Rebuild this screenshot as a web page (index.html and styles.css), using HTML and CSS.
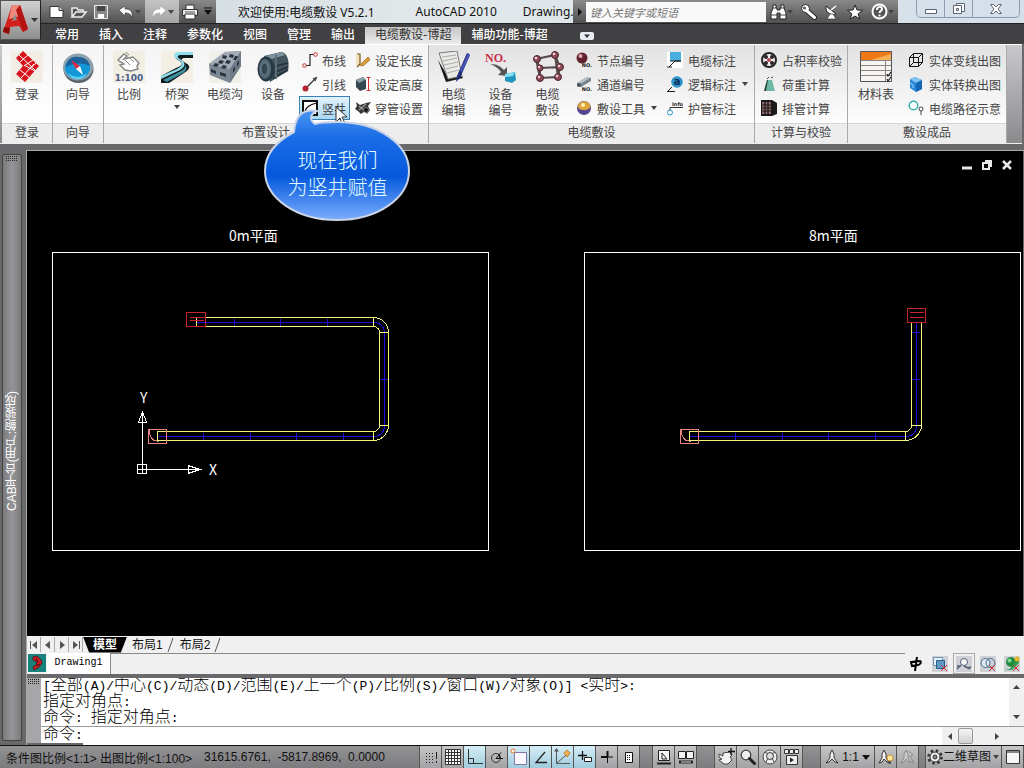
FILE: index.html
```html
<!DOCTYPE html>
<html lang="zh-CN">

<head>
    <meta charset="UTF-8">
    <meta name="viewport" content="width=device-width, initial-scale=1.0">
    <title>电缆敷设 V5.2.1</title>
    <link rel="stylesheet" href="styles.css">
</head>

<body>
    <div class="app">

        <header class="header">
            <button class="app-button" aria-label="应用程序菜单">
                <svg width="38" height="38" viewBox="0 0 38 38">
                    <path d="M10 4h8l8 24-5 3-4-6-9 1-1 7-6-2z" fill="#d3201c" />
                    <path d="M10 4h8l3 10-14 4z" fill="#f08a80" />
                    <path d="M1 31l1-5 6 1-1 6z" fill="#8e0c0a" />
                    <path d="M10 20l3-7 2 6z" fill="#8a8a8a" />
                    <path d="M18 4l8 24-5 3-7-22z" fill="#b41512" />
                    <path d="M29 17h7l-3.500 4z" fill="#333" />
                </svg>
            </button>

            <div class="title-bar">
                <div class="quick-access">
                    <button aria-label="新建"><svg width="18" height="16" viewBox="0 0 18 16"><path d="M2 2.500h9l4 4v7H2z" fill="#fff" stroke="#333" /><path d="M11 2.500v4h4" fill="#ccc" stroke="#333" /></svg></button>
                    <button aria-label="打开"><svg width="18" height="16" viewBox="0 0 18 16"><path d="M2 13V4h5l1 2h5v2M2 13l4-5h10l-4 5z" fill="#555" stroke="#eee" stroke-width="1.500" /></svg></button>
                    <button aria-label="保存"><svg width="18" height="16" viewBox="0 0 18 16"><path d="M2.500 1.500h13v13h-13z" fill="#888" stroke="#eee" /><path d="M5 2h8v5H5z" fill="#444" /><path d="M6 10h6v4H6z" fill="#fff" /></svg></button>
                    <button class="with-arrow" aria-label="放弃"><svg width="18" height="16" viewBox="0 0 18 16"><path d="M2 6l6-4v3c5 0 8 2 7 9-1-4-3-5-7-5v3z" fill="#fff" stroke="#333" stroke-width=".6" /></svg><i class="arrow"></i></button>
                    <button class="with-arrow faded" aria-label="重做"><svg width="18" height="16" viewBox="0 0 18 16"><path d="M16 6l-6-4v3C5 5 2 7 3 14c1-4 3-5 7-5v3z" fill="#fff" stroke="#aaa" stroke-width=".6" /></svg><i class="arrow"></i></button>
                    <button aria-label="打印"><svg width="18" height="16" viewBox="0 0 18 16"><path d="M5 1h8v5H5z" fill="#fff" stroke="#333" /><path d="M1.500 5.500h15v6h-15z" fill="#eee" stroke="#333" /><path d="M4 10h10v5H4z" fill="#fff" stroke="#333" /><path d="M4 8h10" stroke="#555" /></svg></button>
                    <button class="customize" aria-label="自定义"><svg width="8" height="9" viewBox="0 0 8 9"><path d="M0 1h8" stroke="#111" /><path d="M0 3h8L4 8z" fill="#111" /></svg></button>
                </div>
                <div class="caption">
                    <span>欢迎使用:电缆敷设 V5.2.1</span>
                    <span class="product">AutoCAD 2010</span>
                    <span class="file">Drawing.</span>
                </div>
                <div class="info-center">
                    <button class="collapse" aria-label="收拢"><svg width="6" height="8" viewBox="0 0 6 8"><path d="M1 0v8l4-4z" fill="#111" /></svg></button>
                    <input type="text" class="search" placeholder="键入关键字或短语" aria-label="键入关键字或短语">
                    <button class="with-arrow" aria-label="搜索"><svg width="17" height="16" viewBox="0 0 17 16"><path d="M3 1h3v3h1v2h3V4h1V1h3v3l2 5v6h-6V9H7v6H1V9l2-5z" fill="#fff" stroke="#222" /><path d="M1 11h6M10 11h6M3 4h4M10 4h4" stroke="#444" /></svg><i class="arrow"></i></button>
                    <button aria-label="速博应用中心"><svg width="18" height="16" viewBox="0 0 18 16"><path d="M6.500 6.500l8 7" stroke="#222" stroke-width="5" stroke-linecap="round" /><circle cx="5.500" cy="4.500" r="4" fill="#fff" stroke="#222" /><path d="M6.500 6.500l8 7" stroke="#fff" stroke-width="3" stroke-linecap="round" /><circle cx="4.500" cy="4" r="1.500" fill="#555" /></svg></button>
                    <button aria-label="通讯中心"><svg width="16" height="16" viewBox="0 0 16 16"><path d="M2 2c-1 6 4 10 10 8z" fill="#fff" stroke="#222" /><path d="M7 6l5-4" stroke="#fff" stroke-width="1.500" /><path d="M6 10l-3 5h9l-3-5z" fill="#fff" stroke="#222" stroke-width=".6" /></svg></button>
                    <button aria-label="收藏夹"><svg width="16" height="16" viewBox="0 0 16 16"><path d="M8 1l2 5 5.500.300-4.300 3.500 1.500 5.200L8 12l-4.700 3 1.500-5.200L.500 6.300 6 6z" fill="#fff" stroke="#222" /></svg></button>
                    <button class="with-arrow" aria-label="帮助"><svg width="17" height="17" viewBox="0 0 17 17"><circle cx="8.500" cy="8.500" r="7" fill="#555" stroke="#fff" stroke-width="2" /><path d="M6 7c0-4 5-4 5-1 0 2-2.500 2-2.500 4M8.500 11.500v2" fill="none" stroke="#fff" stroke-width="2" /></svg><i class="arrow"></i></button>
                </div>
                <div class="window-buttons">
                    <button aria-label="最小化"><svg width="14" height="12" viewBox="0 0 14 12"><path d="M1.500 6.500h11v4h-11z" fill="#fff" stroke="#5b6475" /></svg></button>
                    <button aria-label="还原"><svg width="14" height="13" viewBox="0 0 14 13"><path d="M4.500 1.500h8v8h-8z" fill="#fff" stroke="#5b6475" /><path d="M1.500 3.500h8v8h-8z" fill="#fff" stroke="#5b6475" /><path d="M4.500 6.500h2v2h-2z" fill="#fff" stroke="#5b6475" /></svg></button>
                    <button class="close" aria-label="关闭"><svg width="14" height="12" viewBox="0 0 14 12"><path d="M1.500 1.500h3L7 4l2.500-2.500h3L9 6l3.500 4.500h-3L7 8l-2.500 2.500h-3L5 6z" fill="#fff" stroke="#5b6475" /></svg></button>
                </div>
            </div>

            <nav class="ribbon-tabs">
                <a href="#">常用</a>
                <a href="#">插入</a>
                <a href="#">注释</a>
                <a href="#">参数化</a>
                <a href="#">视图</a>
                <a href="#">管理</a>
                <a href="#">输出</a>
                <a href="#" class="active">电缆敷设-博超</a>
                <a href="#">辅助功能-博超</a>
                <button class="ribbon-toggle" aria-label="最小化功能区"><svg width="14" height="8" viewBox="0 0 14 8"><rect width="14" height="8" rx="2" fill="#e8ebf2" /><path d="M4 2.500h6L7 6z" fill="#333" /></svg></button>
            </nav>
        </header>

        <div class="ribbon">
            <section class="panel">
                <div class="tools">
                    <button class="big">
                        <svg width="32" height="32" viewBox="0 0 32 32"><path d="M0 0h32v32H0z" fill="#f2eee4" /><path d="M12 0l16 15-14 16-9-8 7-8-7-8z" fill="#d8141c" /><path d="M9 11L17 4M13 15l9-6M17 19l8-7M8 4l16 15M9 19l10 8M13 14l11 6M10 27l13-14" stroke="#fff" fill="none" /></svg>
                        <span>登录</span>
                    </button>
                </div>
                <h2>登录</h2>
            </section>

            <section class="panel">
                <div class="tools">
                    <button class="big">
                        <svg width="32" height="32" viewBox="0 0 32 32"><ellipse cx="16.500" cy="18" rx="15" ry="14" fill="#566069" /><ellipse cx="16" cy="16" rx="15" ry="13.500" fill="#8fa0ad" /><ellipse cx="15.500" cy="17" rx="12.500" ry="11" fill="#1296d8" /><path d="M3.500 16C5 8 11 5 16 6c7 0 11 4 12 9-8-4-16-3-24.500 1z" fill="#1f5f9a" /><path d="M6 22c5 5 14 5 19 0-3 8-16 8-19 0z" fill="#5ad2f5" /><path d="M9 9l9 6-4 3z" fill="#e32b3e" /><path d="M18 15l3 9-7-6z" fill="#fff" /></svg>
                        <span>向导</span>
                    </button>
                </div>
                <h2>向导</h2>
            </section>

            <section class="panel">
                <div class="tools">
                    <button class="big">
                        <svg width="32" height="32" viewBox="0 0 32 32"><path d="M0 0h32v32H0z" fill="#f1eee2" /><path d="M5 9l6-6 3 2-3 3 9-2 6 6-2 3 1 3-7 2-6-1-5-5 4-1-5-3z" fill="#fff" stroke="#888" stroke-width="1.500" /><path d="M12 9l5 5M17 7l4 4M13 1l3 3" stroke="#888" /><text x="16" y="30" text-anchor="middle" class="icon-text scale-text">1:100</text></svg>
                        <span>比例</span>
                    </button>
                    <button class="big">
                        <svg width="32" height="32" viewBox="0 0 32 32"><path d="M0 0h32v32H0z" fill="#f3efe4" /><path d="M32 3H18c-4 0-5 4-1 6 7 4 3 6-2 8L0 25v7h8l15-10c8-5 6-8 0-11-4-2-2-4 1-4h8z" fill="#11191c" /><path d="M32 1H17c-5 1-5 5-1 7 7 4 6 7 0 10L0 25v3l19-9c6-4 6-7 0-11-4-2-2-4 1-4h12z" fill="#8fe0ec" /><path d="M2 29l18-9c5-3 5-5 3-7 4 3 3 6-1 9L6 31z" fill="#3f8fa0" /></svg>
                        <span>桥架</span>
                        <i class="arrow"></i>
                    </button>
                    <button class="big">
                        <svg width="32" height="32" viewBox="0 0 32 32"><path d="M0 0h32v32H0z" fill="#f1efe9" /><path d="M0 13L16 1l16-1v15L21 32 1 24z" fill="#7d8895" /><path d="M0 13L16 1l16-1-11 18z" fill="#a2abb5" /><path d="M21 18L32 0v15L21 32z" fill="#707b88" /><path d="M14 4l4 1-1 3-4-1zM21 3l4 1-1 3-4-1zM11 9l4 1-2 3-4-1zM18 9l4 1-2 3-4-1zM26 5h3l-2 4h-3zM6 12l4 1-2 3-4-1zM14 14l4 1-2 3-4-1zM2 18l5 2v3l-5-2zM11 21l6 2v3l-6-2zM24 18l2-3v4l-2 3zM28 12l2-3v4l-2 3z" fill="#2b333d" /></svg>
                        <span>电缆沟</span>
                    </button>
                    <button class="big">
                        <svg width="32" height="32" viewBox="0 0 32 32"><path d="M7 5l17-4c6 0 9 9 7 19L13 31z" fill="#44545f" /><path d="M9 5l16-4 3 3-17 5z" fill="#7f949e" /><path d="M15 16l16-4M16 22l15-6M16 27l15-8" stroke="#233038" stroke-width="1.500" /><ellipse cx="9" cy="18" rx="8.500" ry="12.500" fill="#293943" /><ellipse cx="8" cy="18" rx="6" ry="10" fill="#526a76" /><ellipse cx="7.500" cy="18" rx="3.500" ry="6" fill="#34464f" stroke="#6d838d" /><path d="M19 4v24" stroke="#5a6e79" stroke-width="2" /></svg>
                        <span>设备</span>
                    </button>
                    <div class="small-col">
                        <button class="small">
                            <svg width="16" height="16" viewBox="0 0 16 16"><path d="M3 13.500h5v-11h4" fill="none" stroke="#222" stroke-width="1.200" /><circle cx="2.500" cy="13.500" r="1.800" fill="#fff" stroke="#c3272b" /><circle cx="13.500" cy="2.500" r="1.800" fill="#fff" stroke="#c3272b" /></svg>
                            <span>布线</span>
                        </button>
                        <button class="small">
                            <svg width="16" height="16" viewBox="0 0 16 16"><path d="M4 12L14 2" stroke="#333" stroke-width="1.200" /><path d="M15.500.500l-5 2 3 3z" fill="#444" /><circle cx="3.500" cy="12.500" r="3" fill="#b32531" /></svg>
                            <span>引线</span>
                        </button>
                        <button class="small selected">
                            <svg width="16" height="16" viewBox="0 0 16 16"><path d="M1 1h14v14H1z" fill="#fff" stroke="#111" stroke-width="2" /><path d="M3 13c0-6 5-8 11-10" fill="none" stroke="#111" stroke-width="1.300" /></svg>
                            <span>竖井</span>
                        </button>
                    </div>
                    <div class="small-col">
                        <button class="small">
                            <svg width="16" height="16" viewBox="0 0 16 16"><path d="M1 2l4 1v9l9-8 1 3-9 8-5-2z" fill="#f3e3bd" /><path d="M2 2h3v10M5 12l-3 3" fill="none" stroke="#7b5218" stroke-width="1.200" /><path d="M5 13l8-8 2 3-7 6z" fill="#d99b34" stroke="#8a5c1c" stroke-width=".6" /></svg>
                            <span>设定长度</span>
                        </button>
                        <button class="small">
                            <svg width="16" height="16" viewBox="0 0 16 16"><path d="M1 4l7-3 3 3v9l-6 2-4-4z" fill="#34474f" /><path d="M1 4l7-3 2 3-6 3z" fill="#8aa0a5" /><path d="M13.500 2v12M11.500 1.500h4M11.500 14.500h4" stroke="#d22f38" /></svg>
                            <span>设定高度</span>
                        </button>
                        <button class="small">
                            <svg width="16" height="16" viewBox="0 0 16 16"><path d="M1 2l4 3 6-2 5-1-3 4 2 4-3 4-2-3-4 3-3-3-3-2 2-3z" fill="#363636" /><path d="M4 6l8 7M11 4l-7 6" stroke="#999" stroke-width="1.500" /><circle cx="11" cy="10" r="2.500" fill="#111" stroke="#777" /></svg>
                            <span>穿管设置</span>
                        </button>
                    </div>
                </div>
                <h2>布置设计</h2>
            </section>

            <section class="panel shaded cabling">
                <div class="tools">
                    <button class="big">
                        <svg width="32" height="32" viewBox="0 0 32 32"><path d="M0 9l8 22 17-4-2-4-13 3z" fill="#151515" /><path d="M1 2l18-2 5 25-14 3z" fill="#e9e9e6" stroke="#777" /><path d="M4 6l14-2M5 10l14-3M6 14l14-3M8 18l12-3M9 22l12-3" stroke="#aaa" /><path d="M29 2l3 2-10 23-4 4 1-6z" fill="#202b7a" /><path d="M30 2l2 2-8 17-2-1z" fill="#4755b5" /></svg>
                        <span>电缆<br>编辑</span>
                    </button>
                    <button class="big">
                        <svg width="32" height="32" viewBox="0 0 32 32"><text x="0" y="11" class="icon-text no-text">NO.</text><path d="M5 13c8 0 11 3 14 6l3-3v9l-9-1 3-3c-3-4-6-6-11-8z" fill="#555" /><path d="M20 23l10-2 1 8-4 3-7-2z" fill="#1f96bd" /><path d="M20 23l10-2-2 4-8 1z" fill="#82dff4" /></svg>
                        <span>设备<br>编号</span>
                    </button>
                    <button class="big">
                        <svg width="32" height="32" viewBox="0 0 32 32"><path d="M4 8l19-4 5 12-20 1zM4 8l4 19 18-1-3-22M8 17v10M28 16l-2 10" fill="none" stroke="#55484b" stroke-width="2" /><g fill="#8e4a57" stroke="#4a262e"><circle cx="5" cy="8" r="3.500" /><circle cx="23" cy="4" r="3.500" /><circle cx="28" cy="16" r="3.500" /><circle cx="8" cy="17" r="3" /><circle cx="8" cy="27" r="3.500" /><circle cx="26" cy="26" r="3.500" /></g><g fill="#f1cfd5"><circle cx="4" cy="7" r="1.300" /><circle cx="22" cy="3" r="1.300" /><circle cx="27" cy="15" r="1.300" /><circle cx="7" cy="16" r="1.200" /><circle cx="7" cy="26" r="1.300" /><circle cx="25" cy="25" r="1.300" /></g></svg>
                        <span>电缆<br>敷设</span>
                    </button>
                    <div class="small-col">
                        <button class="small">
                            <svg width="16" height="16" viewBox="0 0 16 16"><circle cx="6" cy="6" r="5.500" fill="#63222f" /><circle cx="4.500" cy="4" r="2" fill="#dcaab4" /><text x="16" y="15" text-anchor="end" class="icon-text tiny-text">NO.</text></svg>
                            <span>节点编号</span>
                        </button>
                        <button class="small">
                            <svg width="16" height="16" viewBox="0 0 16 16"><path d="M1 7l10-6 4 1v3L5 11l-4-1z" fill="#78848c" /><path d="M1 7l10-6 3 1L4 8z" fill="#b8c2c8" /><circle cx="3" cy="9" r="2" fill="#4c565c" /><text x="16" y="15" text-anchor="end" class="icon-text tiny-text">NO.</text></svg>
                            <span>通道编号</span>
                        </button>
                        <button class="small">
                            <svg width="16" height="16" viewBox="0 0 16 16"><circle cx="8" cy="8" r="7" fill="#5a4690" /><path d="M2 5c3-5 10-5 12 0 1 3-2 5-6 5S1 8 2 5z" fill="#e0a53a" /><circle cx="7" cy="5" r="2" fill="#fdf0b0" /></svg>
                            <span>敷设工具</span>
                            <i class="arrow"></i>
                        </button>
                    </div>
                    <div class="small-col">
                        <button class="small">
                            <svg width="16" height="16" viewBox="0 0 16 16"><path d="M0 0h16v16H0z" fill="#fff" /><path d="M3 0h11v9H3z" fill="#49aee0" /><path d="M3 9h11M14 9H8l-6 6M0 15h5" fill="none" stroke="#222" /></svg>
                            <span>电缆标注</span>
                        </button>
                        <button class="small">
                            <svg width="16" height="16" viewBox="0 0 16 16"><circle cx="10" cy="6" r="5.800" fill="#2c95cc" /><text x="10" y="9" text-anchor="middle" class="icon-text a-text">a</text><path d="M5 11l-4 4M0 15.500h8" stroke="#222" /></svg>
                            <span>逻辑标注</span>
                            <i class="arrow"></i>
                        </button>
                        <button class="small">
                            <svg width="16" height="16" viewBox="0 0 16 16"><text x="16" y="6" text-anchor="end" class="icon-text tiny-text">Info</text><path d="M3 11V7.500h13" fill="none" stroke="#333" /><circle cx="3" cy="12.500" r="2.500" fill="#fff" stroke="#2b8fc0" /></svg>
                            <span>护管标注</span>
                        </button>
                    </div>
                </div>
                <h2>电缆敷设</h2>
            </section>

            <section class="panel shaded">
                <div class="tools">
                    <div class="small-col">
                        <button class="small">
                            <svg width="16" height="16" viewBox="0 0 16 16"><circle cx="8" cy="8" r="7" fill="#eee" stroke="#222" stroke-width="2" /><g fill="#2b2426"><circle cx="5" cy="5" r="2" /><circle cx="11" cy="5" r="2" /><circle cx="5" cy="11" r="2" /><circle cx="11" cy="11" r="2" /></g><circle cx="8" cy="8" r="2" fill="#b34d5c" /></svg>
                            <span>占积率校验</span>
                        </button>
                        <button class="small">
                            <svg width="16" height="16" viewBox="0 0 16 16"><path d="M3 15l3-11h5l3 11z" fill="#6fb7a6" /><path d="M3 15L6 4h1L5 15z" fill="#2a4a42" /><path d="M6 3l2-2M10 2l2-1" stroke="#444" /></svg>
                            <span>荷重计算</span>
                        </button>
                        <button class="small">
                            <svg width="16" height="16" viewBox="0 0 16 16"><path d="M0 0h11l5 3v11l-5 2H0z" fill="#1d1a1b" /><path d="M1 2h9v12H1z" fill="#8b6567" /><path d="M1 5h9M1 8h9M1 11h9M4 2v12M7 2v12" stroke="#1d1a1b" stroke-width="1.200" /></svg>
                            <span>排管计算</span>
                        </button>
                    </div>
                </div>
                <h2>计算与校验</h2>
            </section>

            <section class="panel shaded">
                <div class="tools">
                    <button class="big wide">
                        <svg width="32" height="32" viewBox="0 0 32 32"><path d="M.500.500h31v30H.500z" fill="#f7f5f2" stroke="#555" /><path d="M1 1h30v8H1z" fill="#ee7a17" /><path d="M14 8L31 3v6H12z" fill="#f7b054" /><path d="M1 9.500h30M1 14.500h30M1 19.500h30M1 24.500h30M25.500 10v20" stroke="#8b8580" /><path d="M27 23l1 2 3-4M27 28l1 2 3-4" fill="none" stroke="#222" stroke-width="1.200" /></svg>
                        <span>材料表</span>
                    </button>
                    <div class="small-col">
                        <button class="small">
                            <svg width="16" height="16" viewBox="0 0 16 16"><path d="M1.500 5.500h9v9h-9zM5.500 1.500h9v9h-9zM1.500 5.500l4-4M10.500 5.500l4-4M10.500 14.500l4-4M1.500 14.500l4-4" fill="none" stroke="#111" /></svg>
                            <span>实体变线出图</span>
                        </button>
                        <button class="small">
                            <svg width="16" height="16" viewBox="0 0 16 16"><path d="M2 3l5-2 7 3v9l-6 3-6-4z" fill="#2a88d8" /><path d="M2 3l5-2 7 3-6 3z" fill="#84c4f2" /><path d="M8 7l6-3v9l-6 3z" fill="#1668b5" /><path d="M2 7l3 2v3" fill="none" stroke="#9fd5fa" /></svg>
                            <span>实体转换出图</span>
                        </button>
                        <button class="small">
                            <svg width="16" height="16" viewBox="0 0 16 16"><circle cx="5.500" cy="5.500" r="4.300" fill="#fff" stroke="#38b0ae" stroke-width="1.500" /><circle cx="13" cy="9" r="2" fill="#fff" stroke="#444" /><path d="M13 11v4" stroke="#444" /></svg>
                            <span>电缆路径示意</span>
                        </button>
                    </div>
                </div>
                <h2>敷设成品</h2>
            </section>
        </div>

        <main class="workspace">
            <aside class="palette">
                <div class="palette-bar">
                    <div class="grip"></div>
                    <span>CAB平台(用户:鲍骏成)</span>
                </div>
            </aside>

            <div class="document">
                <div class="canvas">
                    <svg class="drawing" viewBox="27 151 996 485">
                        <g class="frame">
                            <rect x="52.500" y="252.500" width="436" height="298" />
                            <rect x="584.500" y="252.500" width="436" height="298" />
                        </g>
                        <text x="229" y="241" class="plan-title">0m平面</text>
                        <text x="809" y="241" class="plan-title">8m平面</text>

                        <!-- 0m: tray centre lines and supports -->
                        <g class="centre">
                            <path d="M197 322.500H374A10 10 0 0 1 384.500 332V426A10 10 0 0 1 374 436.500H158" />
                            <path d="M234.500 319v7M280.500 319v7M327.500 319v7M381 379.500h7M203.500 433v7M250.500 433v7M296.500 433v7M343.500 433v7" />
                        </g>
                        <g class="tray">
                            <path d="M204 317.500H373.500A15 15 0 0 1 388.500 332.500V425.500A15 16 0 0 1 373.500 440.500H157.500V431.500H373.500A6 6 0 0 0 379.500 425.500V332.500A6 6 0 0 0 373.500 326.500H196.500V318" />
                            <path d="M373.500 318v9M379 332.500h9M379 425.500h9M373.500 431v9" />
                        </g>
                        <path class="shaft" d="M186.500 312.500h19v14h-19zM190 317.500h15M190 320.500h14" />
                        <path class="shaft-end" d="M148.500 429.500h18v14h-18zM149 430c1 7 3 12 10 11" />

                        <!-- 8m -->
                        <g class="centre">
                            <path d="M916.500 323V426A10 10 0 0 1 906 436.500H690" />
                            <path d="M912 332.500h8M912 379.500h8M735.500 433v7M782.500 433v7M828.500 433v7M875.500 433v7" />
                        </g>
                        <g class="tray">
                            <path d="M921.500 323V425.500A16 16 0 0 1 905.500 440.500H689.500V431.500H905.500A6 6 0 0 0 911.500 425.500V323" />
                            <path d="M911 425.500h10M905.500 431v9" />
                        </g>
                        <path class="shaft" d="M907.500 308.500h18v14h-18zM910 312.500h14M910 317.500h14" />
                        <path class="shaft-end" d="M680.500 429.500h18v14h-18zM681 430c1 7 3 12 10 11" />

                        <!-- UCS icon -->
                        <g class="ucs">
                            <path d="M137.500 464.500h9v9h-9zM142.500 473V412.500M137 469.500h63M142.500 412l-4 10h8zM200 469.500l-12-4v8z" />
                            <text x="140" y="403">Y</text>
                            <text x="209" y="475">X</text>
                        </g>
                    </svg>
                    <div class="mdi-buttons">
                        <button aria-label="最小化图形"><svg width="10" height="10" viewBox="0 0 10 10"><path d="M0 8h10" stroke="#e8e8e8" stroke-width="3" /></svg></button>
                        <button aria-label="还原图形"><svg width="10" height="10" viewBox="0 0 10 10"><path d="M3 1h6v6M1 3h6v6H1z" fill="none" stroke="#e8e8e8" stroke-width="2" /></svg></button>
                        <button aria-label="关闭图形"><svg width="10" height="10" viewBox="0 0 10 10"><path d="M1 1l8 8M9 1L1 9" stroke="#e8e8e8" stroke-width="2.500" /></svg></button>
                    </div>
                </div>

                <div class="layout-tabs">
                    <button class="step" aria-label="第一个"><svg width="10" height="10" viewBox="0 0 10 10"><path d="M1.500 1v8" stroke="#555" /><path d="M8 1v8L3 5z" fill="#555" /></svg></button>
                    <button class="step" aria-label="上一个"><svg width="10" height="10" viewBox="0 0 10 10"><path d="M7 1v8L2 5z" fill="#555" /></svg></button>
                    <button class="step" aria-label="下一个"><svg width="10" height="10" viewBox="0 0 10 10"><path d="M3 1v8l5-4z" fill="#555" /></svg></button>
                    <button class="step" aria-label="最后一个"><svg width="10" height="10" viewBox="0 0 10 10"><path d="M8.500 1v8" stroke="#555" /><path d="M2 1v8l5-4z" fill="#555" /></svg></button>
                    <a href="#" class="model">模型</a>
                    <a href="#">布局1</a>
                    <svg class="slash" width="8" height="14" viewBox="0 0 8 14"><path d="M7 0L2 14" stroke="#555" /></svg>
                    <a href="#">布局2</a>
                    <svg class="slash" width="8" height="14" viewBox="0 0 8 14"><path d="M7 0L2 14" stroke="#555" /></svg>
                </div>

                <div class="doc-bar">
                    <svg class="doc-icon" width="18" height="18" viewBox="0 0 18 18"><path d="M0 0h18v18H0z" fill="#17827c" /><path d="M5 3l4-1 4 4 1 3-3 4-5 3-1-3 3-2 1-3-4-2z" fill="#d0202a" stroke="#5c1218" /><path d="M8 4l2 4M8 12l4-2" stroke="#3b0a0e" /></svg>
                    <a href="#" class="doc-tab">Drawing1</a>
                    <div class="doc-line"></div>
                    <div class="doc-tools">
                        <button aria-label="中"><svg width="16" height="16" viewBox="0 0 16 16"><path d="M9 1L7 15M3 6l9-1c2 1 0 4-2 4L4 10z" fill="none" stroke="#000" stroke-width="2" /></svg></button>
                        <button aria-label="图层"><svg width="16" height="16" viewBox="0 0 16 16"><path d="M0 0h16v16H0z" fill="#cfd0d6" /><path d="M1.500 1.500h9v8h-9z" fill="#e4f1fb" stroke="#6a93b0" /><path d="M4.500 4.500h8v8h-8z" fill="#6199c2" stroke="#24618f" /><path d="M9 9l6 6M15 9l-6 6" stroke="#cf2b37" /></svg></button>
                        <button class="pressed" aria-label="对象查找"><svg width="16" height="16" viewBox="0 0 16 16"><path d="M0 0h16v16H0z" fill="#cfd0d6" /><circle cx="8" cy="6" r="3.500" fill="#f8f8f8" stroke="#566279" /><path d="M5 9l-4 4M8 10l6 3M1 10h4M11 12l4-1" stroke="#566279" stroke-width="1.500" /></svg></button>
                        <button aria-label="重叠"><svg width="16" height="16" viewBox="0 0 16 16"><path d="M0 0h16v16H0z" fill="#cfd0d6" /><circle cx="5.500" cy="7" r="4.500" fill="#dfe8ee" stroke="#40698b" /><circle cx="10.500" cy="7" r="4.500" fill="none" stroke="#40698b" /><path d="M9 9l6 6M15 9l-6 6" stroke="#cf2b37" /></svg></button>
                        <button aria-label="渲染"><svg width="16" height="16" viewBox="0 0 16 16"><path d="M0 0h16v16H0z" fill="#cfd0d6" /><circle cx="7" cy="6" r="5" fill="#218a40" /><circle cx="5.500" cy="4.500" r="2" fill="#7ede90" /><path d="M0 14l6-1 9-12v6l-7 7z" fill="#2b9b4d" /><circle cx="13" cy="3" r="2.500" fill="#e2b928" /><path d="M9 9l6 6M15 9l-6 6" stroke="#cf2b37" /></svg></button>
                    </div>
                </div>

                <section class="command">
                    <div class="command-grip"><div class="grip"></div></div>
                    <div class="command-body">
                        <div class="history">
                            <div class="lines">
                                <p><kbd>[</kbd>全部<kbd>(A)/</kbd>中心<kbd>(C)/</kbd>动态<kbd>(D)/</kbd>范围<kbd>(E)/</kbd>上一个<kbd>(P)/</kbd>比例<kbd>(S)/</kbd>窗口<kbd>(W)/</kbd>对象<kbd>(O)] &lt;</kbd>实时<kbd>&gt;:</kbd></p>
                                <p>指定对角点<kbd>:</kbd></p>
                                <p>命令<kbd>: </kbd>指定对角点<kbd>:</kbd></p>
                            </div>
                            <div class="v-scroll">
                                <button aria-label="向上滚动"><svg width="7" height="4" viewBox="0 0 7 4"><path d="M0 4h7L3.500 0z" fill="#444" /></svg></button>
                                <button aria-label="向下滚动"><svg width="7" height="4" viewBox="0 0 7 4"><path d="M0 0h7L3.500 4z" fill="#444" /></svg></button>
                            </div>
                        </div>
                        <div class="prompt">
                            <label for="cmd">命令<kbd>:</kbd></label>
                            <input type="text" id="cmd">
                            <div class="h-scroll">
                                <button aria-label="向左滚动"><svg width="4" height="7" viewBox="0 0 4 7"><path d="M4 0v7L0 3.500z" fill="#444" /></svg></button>
                                <div class="thumb"></div>
                                <button class="right" aria-label="向右滚动"><svg width="4" height="7" viewBox="0 0 4 7"><path d="M0 0v7l4-3.500z" fill="#444" /></svg></button>
                            </div>
                        </div>
                    </div>
                </section>
            </div>
        </main>

        <footer class="status">
            <span class="scales">条件图比例&lt;1:1&gt; 出图比例&lt;1:100&gt;</span>
            <span class="coords">31615.6761, &nbsp;-5817.8969, &nbsp;0.0000</span>
            <div class="group">
                <button aria-label="捕捉"><svg width="16" height="16" viewBox="0 0 16 16"><path d="M3 4.500h8M3 7.500h8M3 10.500h8M3 13.500h8" stroke="#222" stroke-dasharray="1 2" /><path d="M13.500 3v11" stroke="#222" stroke-dasharray="7 2" /></svg></button>
                <button aria-label="栅格"><svg width="16" height="16" viewBox="0 0 16 16"><path d="M.500.500h15v15H.500z" fill="#fff" /><path d="M.500.500h15v15H.500zM3.500 0v16M6.500 0v16M9.500 0v16M12.500 0v16M0 3.500h16M0 6.500h16M0 9.500h16M0 12.500h16" fill="none" stroke="#333" /></svg></button>
                <button class="on" aria-label="正交"><svg width="16" height="16" viewBox="0 0 16 16"><path d="M1.500 0v14.500H16M2 9.500h4.500V14" fill="none" stroke="#333" /></svg></button>
                <button aria-label="极轴"><svg width="16" height="16" viewBox="0 0 16 16"><circle cx="7" cy="9" r="4.500" fill="none" stroke="#333" /><path d="M14 9.500H7l5-6M10.500 5v4" fill="none" stroke="#111" /></svg></button>
                <button class="on" aria-label="对象捕捉"><svg width="18" height="18" viewBox="0 0 18 18"><path d="M4.500 4.500h12v12h-12z" fill="#f8f7ff" stroke="#8178a8" /><circle cx="3" cy="3" r="2" fill="#fff" stroke="#e57324" /></svg></button>
                <button class="on" aria-label="对象追踪"><svg width="16" height="16" viewBox="0 0 16 16"><path d="M12 3L3 13.500h11" fill="none" stroke="#222" stroke-width="1.300" /></svg></button>
                <button class="on" aria-label="动态UCS"><svg width="18" height="18" viewBox="0 0 18 18"><path d="M2.500 1v14.500H16M3 15L12 7" fill="none" stroke="#555" /><path d="M10 5l3-3 3 3-3 4z" fill="#f6b04e" stroke="#b3701c" stroke-width=".8" /><path d="M0 3.500L2.500 0 5 3.500z" fill="#555" /></svg></button>
                <button class="on" aria-label="动态输入"><svg width="16" height="16" viewBox="0 0 16 16"><path d="M1 6.500h9M5.500 2v9" stroke="#111" stroke-width="1.300" /><path d="M7.500 8.500h7v4h-7z" fill="#fff" stroke="#222" /></svg></button>
                <button aria-label="线宽"><svg width="16" height="16" viewBox="0 0 16 16"><path d="M2 8h12" stroke="#111" /><path d="M2 8h6M8.500 2v6" stroke="#111" stroke-width="2" /><path d="M8.500 2v12" stroke="#111" /></svg></button>
                <button aria-label="快捷特性"><svg width="16" height="16" viewBox="0 0 16 16"><path d="M4.500 3.500h7v10h-7z" fill="#fff" stroke="#111" /><path d="M6 6.500h4M6 8.500h4M6 10.500h4" stroke="#111" stroke-dasharray="1 1" /></svg></button>
            </div>
            <div class="group">
                <button aria-label="模型空间"><svg width="16" height="16" viewBox="0 0 16 16"><path d="M2.500 1.500h11v10h-11z" fill="#f3f3f3" stroke="#222" /><path d="M6 4v6h5z" fill="none" stroke="#222" /><path d="M1 14.500h14" stroke="#222" stroke-width="2" /></svg></button>
                <button aria-label="快速查看"><svg width="16" height="16" viewBox="0 0 16 16"><path d="M.500 2.500h7v7h-7zM8.500 2.500h7v7h-7z" fill="#f3f3f3" stroke="#222" /><path d="M1 13h14" stroke="#222" stroke-width="3" /><path d="M3 13h10" stroke="#ddd" /></svg></button>
            </div>
            <div class="group wide-gap">
                <button aria-label="平移"><svg width="18" height="18" viewBox="0 0 18 18"><path d="M2 6l4 2V5l7-1 2 3-2 2 2 3-4 4H7l-5-4 3-1-3-2z" fill="#f4f4f4" stroke="#444" /><path d="M14 0v7M11 3.500h7" stroke="#111" stroke-width="1.300" /></svg></button>
                <button aria-label="缩放"><svg width="16" height="16" viewBox="0 0 16 16"><circle cx="6" cy="6" r="4.800" fill="#eee" stroke="#444" stroke-width="1.300" /><path d="M9.500 9.500l5 5" stroke="#222" stroke-width="3" stroke-linecap="round" /></svg></button>
                <button aria-label="控制盘"><svg width="16" height="16" viewBox="0 0 16 16"><circle cx="8" cy="8" r="7" fill="#eee" stroke="#444" /><circle cx="8" cy="7" r="3.500" fill="#ddd" stroke="#444" /><path d="M3 3l3 2M13 3l-3 2M4 13l2-4M12 13l-2-4" stroke="#444" /></svg></button>
                <button aria-label="ShowMotion"><svg width="16" height="16" viewBox="0 0 16 16"><path d="M.500.500h4v4h-4zM5.500.500h4v4h-4zM10.500.500h4v4h-4zM2.500 6.500h11v9h-11z" fill="#eee" stroke="#333" /><path d="M6 8.500v5l4-2.500z" fill="#222" /></svg></button>
            </div>
            <div class="group wide-gap">
                <button class="scale"><svg width="14" height="16" viewBox="0 0 14 16"><path d="M7 1l2 4v4l4 5-3-1-3-3-3 3-3 1 4-5V5z" fill="#f4f4f4" stroke="#333" /></svg>1:1<i class="arrow"></i></button>
                <button aria-label="注释可见性"><svg width="16" height="16" viewBox="0 0 16 16"><path d="M6 1l2 4v4l3 5-2-1-3-3-2 3-3 1 3-5V5z" fill="#f4f4f4" stroke="#333" /><circle cx="12" cy="9" r="3" fill="#ffe9a0" stroke="#d9932a" /><path d="M12 12v3" stroke="#555" stroke-width="2" /></svg></button>
                <button aria-label="自动添加比例"><svg width="16" height="16" viewBox="0 0 16 16"><path d="M6 1l2 4v4l3 5-2-1-3-3-2 3-3 1 3-5V5zM8 2l5 4-3 1 4 7-3-2" fill="#ccc" stroke="#888" /></svg></button>
            </div>
            <div class="group last">
                <label class="workspace-switch">
                    <svg width="16" height="16" viewBox="0 0 16 16"><circle cx="8" cy="8" r="6.500" fill="none" stroke="#333" stroke-width="2.500" stroke-dasharray="2.500 2.600" /><circle cx="8" cy="8" r="5" fill="#eee" stroke="#333" /><circle cx="8" cy="8" r="2" fill="#888" stroke="#333" /></svg>
                    <select aria-label="工作空间">
                        <option>二维草图</option>
                    </select>
                    <i class="arrow"></i>
                </label>
                <button aria-label="全屏显示"><svg width="16" height="16" viewBox="0 0 16 16"><path d="M1.500 1.500h13v13h-13z" fill="#f7f7f7" stroke="#333" /><path d="M2 3h12" stroke="#888" stroke-width="2" /></svg></button>
            </div>
        </footer>

        <svg class="pointer" width="13" height="20" viewBox="0 0 13 20"><path d="M1 1v15l4-4 2 6 3-1-3-6h5z" fill="#fff" stroke="#333" /></svg>

        <div class="bubble">
            <svg width="147" height="114" viewBox="0 0 147 114">
                <defs>
                    <linearGradient id="bubbleFill" x1="0" y1="0" x2="0" y2="1">
                        <stop offset="0" stop-color="#4a94f2" />
                        <stop offset=".25" stop-color="#1a6ce6" />
                        <stop offset=".6" stop-color="#0558dc" />
                        <stop offset="1" stop-color="#7aaeff" />
                    </linearGradient>
                </defs>
                <path d="M53 3C46 6 45 12 51 16C58 14 66 14 73 14C114 14 145 36 145 63C145 90 114 112 73 112C32 112 1 90 1 63C1 46 13 33 30 24C31 9 38 0 53 3Z" fill="url(#bubbleFill)" stroke="#c9d3e6" stroke-width="2" />
            </svg>
            <p>现在我们<br>为竖井赋值</p>
        </div>
    </div>
</body>

</html>
```
FILE: styles.css
```css
* {
    box-sizing: border-box;
}

body {
    margin: 0;
    font-family: "DejaVu Sans", "Noto Sans CJK SC", sans-serif;
    font-size: 12px;
    color: #444;
}

button {
    display: flex;
    align-items: center;
    justify-content: center;
    margin: 0;
    padding: 0;
    border: none;
    background: none;
    font: inherit;
    color: inherit;
}

a {
    color: inherit;
    text-decoration: none;
}

svg {
    display: block;
    flex: none;
}

p,
h2 {
    margin: 0;
}

.app {
    position: relative;
    display: flex;
    flex-direction: column;
    height: 100vh;
    overflow: hidden;
    background: #69696b;
}

.arrow {
    width: 0;
    height: 0;
    border: 3px solid transparent;
    border-top: 4px solid #444;
    border-bottom: none;
}

/* header */
.header {
    display: grid;
    grid-template-columns: 41px 1fr;
    grid-template-rows: 24px 20px;
    background: #414042;
}

.app-button {
    grid-row: 1 / 3;
    height: 40px;
    border: 1px solid #555;
    border-right-color: #222;
    background: linear-gradient(#d0d0d0, #8e8e8e);
}

.title-bar {
    display: flex;
    min-width: 0;
    border-bottom: 1px solid #222;
    background: linear-gradient(90deg, #ccd7df, #e2e8ea 40%, #d4dfea);
}

.quick-access,
.info-center {
    display: flex;
    align-items: stretch;
    flex: none;
    background: linear-gradient(#8a8a8a, #505050);
}

.quick-access {
    width: 175px;
    padding-left: 5px;
}

.quick-access button {
    width: 23px;
}

.quick-access .with-arrow {
    width: 35px;
}

.quick-access .customize {
    width: 16px;
}

.quick-access .faded {
    background: linear-gradient(#c4c4c4, #a5a5a5);
}

.caption {
    display: flex;
    align-items: center;
    flex: 1;
    min-width: 0;
    padding-left: 22px;
    overflow: hidden;
    white-space: nowrap;
    font-family: "Noto Sans", "Noto Sans CJK SC", sans-serif;
    color: #111;
}

.product {
    margin-left: 41px;
}

.file {
    margin-left: 26px;
}

.info-center {
    width: 325px;
}

.info-center button {
    width: 23px;
}

.info-center .with-arrow {
    flex: 1;
}

.info-center .collapse {
    width: 13px;
}

.search {
    width: 180px;
    margin: 2px 0 1px;
    padding: 0 4px;
    border: none;
    background: #faf9fa;
    font-family: "Noto Sans CJK SC", sans-serif;
    font-size: 11px;
    font-style: italic;
}

.search::placeholder {
    color: #777;
}

.window-buttons {
    display: flex;
    flex: none;
    height: 18px;
    margin: 0 4px 0 18px;
    border: 1px solid #8f9bb0;
    border-top: none;
    border-radius: 0 0 5px 5px;
}

.window-buttons button {
    width: 28px;
    border-right: 1px solid #8f9bb0;
}

.window-buttons .close {
    width: 46px;
    border-right: none;
}

.ribbon-tabs {
    display: flex;
    align-items: flex-end;
    padding-left: 4px;
    color: #fff;
    line-height: 17px;
}

.ribbon-tabs a {
    padding: 0 10px;
    font-weight: 500;
    white-space: nowrap;
}

.ribbon-tabs .active {
    padding: 0 10px;
    background: linear-gradient(#c4c4c4, #ececec);
    font-weight: normal;
    color: #333;
}

.ribbon-toggle {
    height: 17px;
    margin-left: 22px;
}

/* ribbon */
.ribbon {
    display: flex;
    flex: none;
    height: 100px;
    margin-right: 2px;
    padding-left: 2px;
    border-top: 1px solid #fff;
    border-bottom: 1px solid #eee;
    background: linear-gradient(#c9c9cb, #8b8b8d);
}

.panel {
    display: flex;
    flex-direction: column;
    flex: none;
    padding: 0 1px;
    border-right: 1px solid #aaa;
    background: linear-gradient(#f4f4f4, #fff 75%);
}

.panel.shaded {
    background: linear-gradient(#e2e2e3, #fdfdfd 80%);
}

.tools {
    display: flex;
    flex: 1;
    padding-top: 3px;
}

.panel h2 {
    height: 20px;
    margin: 0 -1px;
    border-top: 1px solid #d5d5d5;
    background: #ededee;
    font-size: 12px;
    font-weight: normal;
    line-height: 18px;
    text-align: center;
}

.big {
    flex-direction: column;
    justify-content: flex-start;
    width: 48px;
    padding-top: 3px;
    line-height: 16px;
}

.cabling .big {
    width: 47px;
}

.big.wide {
    width: 54px;
}

.big span {
    margin-top: 4px;
}

.big .arrow {
    margin-top: 2px;
}

.small-col {
    margin-left: 2px;
}

.small {
    justify-content: flex-start;
    gap: 4px;
    height: 24px;
    padding: 0 3px 0 2px;
    border: 1px solid transparent;
    white-space: nowrap;
}

.shaded .small {
    gap: 5px;
}

.small .arrow {
    margin: 0 1px;
}

.small.selected {
    border-color: #3c7fb1;
    background: linear-gradient(#e2f2fb, #a8d8f2);
}

.icon-text {
    font-family: "DejaVu Sans", sans-serif;
    font-weight: bold;
}

.scale-text {
    font-size: 9px;
    fill: #4a5f8c;
}

.no-text {
    font-family: "Liberation Serif", serif;
    font-size: 12px;
    fill: #c9304a;
}

.tiny-text {
    font-size: 5px;
    fill: #222;
}

.a-text {
    font-size: 10px;
    fill: #0b2c55;
}

/* workspace */
.workspace {
    display: flex;
    flex: 1;
    min-height: 0;
    padding-top: 6px;
}

.palette {
    display: flex;
    width: 26px;
    padding: 4px 4px 4px 2px;
}

.palette-bar {
    display: flex;
    flex: 1;
    align-items: center;
    flex-direction: column;
    border: 1px solid #444;
    border-radius: 2px;
    background: linear-gradient(90deg, #7b7a7d, #959496 50%, #7c7b7e);
    color: #fff;
}

.palette-bar span {
    margin: auto;
    writing-mode: vertical-rl;
    transform: rotate(180deg);
    font-family: "Liberation Sans", "Noto Sans CJK SC", sans-serif;
    line-height: 16px;
}

.grip {
    width: 12px;
    height: 5px;
    margin: 1px auto 0;
    background: conic-gradient(transparent 75%, #222 0) 0 0 / 2px 2px;
}

.document {
    display: flex;
    flex: 1;
    flex-direction: column;
    min-width: 0;
    border-top: 1px solid #aaa;
    border-left: 1px solid #aaa;
}

.canvas {
    position: relative;
    flex: 1;
    min-height: 0;
    margin-right: 1px;
    background: #000;
}

.drawing {
    width: 100%;
    height: 100%;
    fill: none;
    shape-rendering: crispEdges;
}

.frame {
    stroke: #fff;
}

.centre {
    stroke: #2010e0;
}

.tray {
    stroke: #f4f57c;
}

.shaft {
    stroke: #c8232c;
}

.shaft-end {
    stroke: #ee8585;
}

.ucs {
    stroke: #fff;
}

.plan-title,
.ucs text {
    fill: #fff;
    stroke: none;
    font-family: "Noto Sans CJK SC", sans-serif;
    font-size: 14px;
}

.mdi-buttons {
    position: absolute;
    top: 9px;
    right: 11px;
    display: flex;
    gap: 10px;
}

.layout-tabs {
    display: flex;
    align-items: center;
    flex: none;
    height: 17px;
    background: #f0f0f0;
    font-family: "Liberation Sans", "Noto Sans CJK SC", sans-serif;
    line-height: 16px;
    color: #111;
}

.step {
    width: 14px;
    height: 15px;
    border-right: 1px solid #aaa;
}

.layout-tabs a {
    padding: 0 2px 0 5px;
}

.layout-tabs .model {
    padding: 0 10px;
    background: #000;
    clip-path: polygon(0 0, 100% 0, 86% 100%, 14% 100%);
    font-weight: bold;
    color: #fff;
}

.slash {
    margin: 0 1px;
}

.doc-bar {
    display: flex;
    align-items: stretch;
    flex: none;
    height: 21px;
    background: #f0f0f0;
}

.doc-icon {
    margin: 1px;
}

.doc-tab {
    width: 64px;
    border-right: 1px solid #888;
    background: #fff;
    font-family: "Liberation Mono", monospace;
    font-size: 10px;
    line-height: 20px;
    text-align: center;
    color: #000;
}

.doc-line {
    flex: 1;
    border-top: 1px solid #888;
}

.doc-tools {
    display: flex;
    gap: 2px;
    padding-right: 1px;
}

.doc-tools button {
    width: 22px;
}

.doc-tools .pressed {
    border: 1px solid #aaa;
}

/* command window */
.command {
    display: flex;
    flex: none;
    height: 71px;
    padding: 4px 0 2px;
}

.command-grip {
    width: 14px;
    background: #a6a6a9;
}

.command-body {
    display: flex;
    flex: 1;
    flex-direction: column;
    min-width: 0;
    background: #fff;
    font-family: "Liberation Mono", "Noto Sans CJK SC", monospace;
    font-size: 16px;
    font-weight: 300;
    line-height: 16px;
    color: #000;
}

kbd {
    font-family: "Liberation Mono", monospace;
    font-size: 13px;
    white-space: pre;
}

.history {
    display: flex;
    height: 49px;
    border-bottom: 1px solid #999;
}

.lines {
    flex: 1;
    min-width: 0;
    padding-left: 2px;
    overflow: hidden;
    white-space: nowrap;
}

.lines p {
    height: 16px;
}

.v-scroll {
    display: flex;
    flex-direction: column;
    justify-content: space-between;
    width: 15px;
    padding: 7px 0;
    background: #f0f0f0;
}

.prompt {
    display: flex;
    flex: 1;
    align-items: stretch;
    padding-left: 2px;
}

.prompt input {
    flex: 1;
    min-width: 0;
    padding: 0 4px;
    border: none;
    outline: none;
    font: inherit;
}

.h-scroll {
    display: flex;
    width: 82px;
    background: #f0f0f0;
}

.h-scroll button {
    width: 16px;
}

.h-scroll .right {
    margin-left: 16px;
}

.thumb {
    width: 15px;
    margin: 1px 0;
    border: 1px solid #999;
    border-radius: 2px;
    background: linear-gradient(#f5f5f5, #d2d2d4);
}

/* status bar */
.status {
    display: flex;
    align-items: center;
    flex: none;
    height: 23px;
    border-top: 1px solid #111;
    background: linear-gradient(#929294, #7c7c7e);
    font-family: "Liberation Sans", "Noto Sans CJK SC", sans-serif;
    color: #111;
    white-space: nowrap;
}

.scales {
    width: 197px;
    padding-left: 6px;
}

.coords {
    flex: 1;
    padding-left: 7px;
}

.group {
    display: flex;
    height: 22px;
    margin-right: 12px;
    border-left: 1px solid #555;
}

.group.wide-gap {
    margin-left: 5px;
}

.group button {
    width: 22px;
    border-right: 1px solid #555;
    background: linear-gradient(#c6c6c8, #a2a2a4);
}

.group .on {
    background: linear-gradient(#d6eef6, #9fcbdc);
}

.group .scale {
    gap: 3px;
    width: 54px;
}

.scale .arrow {
    border-width: 5px 4px 0;
    border-top-color: #111;
}

.wide-gap + .last {
    margin-left: -6px;
}

.group.last {
    margin-right: 0;
}

.workspace-switch {
    display: flex;
    align-items: center;
    width: 76px;
    padding: 0 2px 0 1px;
    border-right: 1px solid #555;
    background: linear-gradient(#c6c6c8, #a2a2a4);
}

.workspace-switch select {
    flex: 1;
    min-width: 0;
    margin: 0;
    padding: 0;
    border: none;
    appearance: none;
    background: none;
    font: inherit;
    color: #111;
}

/* callout */
.pointer {
    position: absolute;
    top: 106px;
    left: 335px;
}

.bubble {
    position: absolute;
    top: 108px;
    left: 264px;
}

.bubble p {
    position: absolute;
    top: 38px;
    width: 100%;
    font-family: "Noto Sans CJK SC", sans-serif;
    font-size: 20px;
    font-weight: 300;
    line-height: 27px;
    text-align: center;
    color: #e4ffff;
}
```
